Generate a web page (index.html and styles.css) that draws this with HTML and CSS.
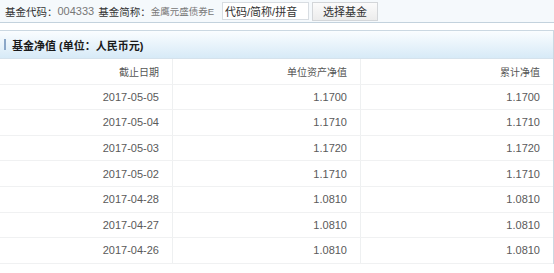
FILE: index.html
```html
<!DOCTYPE html>
<html lang="zh">
<head>
<meta charset="utf-8">
<link rel="stylesheet" href="styles.css">
</head>
<body>
<div class="topbar">
  <span class="lbl">基金代码：</span><span class="val num">004333</span>
  <span class="lbl sp">基金简称：</span><span class="val name">金鹰元盛债券E</span>
  <input class="search" type="text" value="代码/简称/拼音">
  <button class="pick">选择基金</button>
</div>
<div class="panel">
  <div class="phead"><span class="mark"></span><span class="ptitle">基金净值 (单位：人民币元)</span></div>
  <table class="grid">
    <thead>
      <tr><th class="c1">截止日期</th><th class="c2">单位资产净值</th><th class="c3">累计净值</th></tr>
    </thead>
    <tbody>
      <tr><td>2017-05-05</td><td>1.1700</td><td>1.1700</td></tr>
      <tr><td>2017-05-04</td><td>1.1710</td><td>1.1710</td></tr>
      <tr><td>2017-05-03</td><td>1.1720</td><td>1.1720</td></tr>
      <tr><td>2017-05-02</td><td>1.1710</td><td>1.1710</td></tr>
      <tr><td>2017-04-28</td><td>1.0810</td><td>1.0810</td></tr>
      <tr><td>2017-04-27</td><td>1.0810</td><td>1.0810</td></tr>
      <tr><td>2017-04-26</td><td>1.0810</td><td>1.0810</td></tr>
    </tbody>
  </table>
</div>
</body>
</html>
```
FILE: styles.css
```css
html, body {
  margin: 0;
  padding: 0;
  background: #fff;
  font-family: "Liberation Sans", "Noto Sans CJK SC", sans-serif;
  font-size: 11px;
  color: #444;
  overflow: hidden;
}
.topbar {
  height: 22px;
  display: flex;
  align-items: center;
  padding-left: 5px;
  background: #f5f9fc;
  border-bottom: 1px solid #c3d2dd;
}
.lbl { color: #333; font-size: 10.5px; }
.val { color: #777; }
.num { font-size: 11px; }
.sp { margin-left: 4px; }
.name { font-size: 9.5px; }
.search {
  margin: 0 0 0 8px;
  width: 87px;
  height: 18px;
  box-sizing: border-box;
  border: 1px solid #d8dde2;
  background: #fff;
  padding: 0 0 0 2px;
  font-family: "Liberation Sans", "Noto Sans CJK SC", sans-serif;
  font-size: 11px;
  color: #333;
}
.pick {
  margin: 0 0 0 3px;
  width: 66px;
  height: 19px;
  box-sizing: border-box;
  border: 1px solid #d3d6d9;
  background: linear-gradient(#fbfbfb, #ececec);
  font-family: "Liberation Sans", "Noto Sans CJK SC", sans-serif;
  font-size: 11px;
  color: #333;
  padding: 0;
}
.panel {
  margin-top: 7px;
  border-top: 1px solid #cbd8e2;
  border-right: 1px solid #cbd8e2;
}
.phead {
  height: 27px;
  display: flex;
  align-items: center;
  background: linear-gradient(#fafdff, #d7eaf7);
  border-bottom: 1px solid #d5e2ec;
}
.mark {
  width: 2px;
  height: 11px;
  margin-left: 4px;
  margin-right: 6px;
  background: #8aa7c8;
}
.ptitle {
  font-weight: bold;
  color: #1a1a1a;
  font-size: 11px;
}
.grid {
  width: 100%;
  border-collapse: collapse;
  table-layout: fixed;
}
.grid th, .grid td {
  height: 24.6px;
  padding: 0 13px 0 0;
  text-align: right;
  font-weight: normal;
  color: #5a5a5a;
  border-bottom: 1px solid #f0f1f2;
  border-right: 1px solid #eef0f1;
  font-size: 11px;
}
.grid th { color: #555; font-size: 10px; }
.grid .c1 { width: 159px; }
.grid .c2 { width: 174px; }
.grid th:last-child, .grid td:last-child { border-right: none; }
```
